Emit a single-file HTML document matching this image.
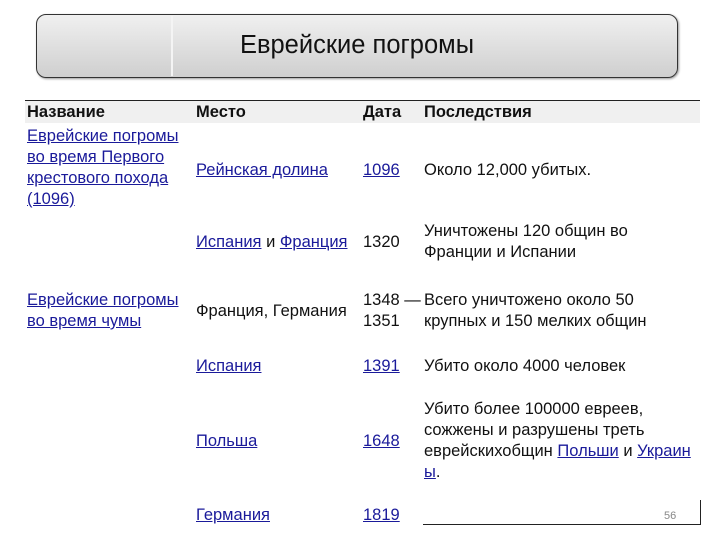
<!DOCTYPE html>
<html><head><meta charset="utf-8"><style>
body{margin:0;width:720px;height:540px;background:#fff;font-family:"Liberation Sans",sans-serif;font-size:16.5px;color:#111;position:relative;overflow:hidden}
.t{position:absolute;white-space:nowrap;line-height:21px;margin-top:1px}
a{color:#1a1a9a;text-decoration:underline}
.box{position:absolute;left:36px;top:14px;width:640px;height:62px;border:1px solid #333;border-radius:10px;background:linear-gradient(#f0f0f0,#cfcfcf);box-shadow:1px 1px 2px #999}
.div{position:absolute;left:134px;top:1px;width:2px;height:60px;background:#f4f4f4}
.hdr{position:absolute;left:25px;top:100px;width:675px;height:22px;background:#f0f0f0;border-top:1px solid #222}
</style></head><body>
<div class="box"><div class="div"></div><div style="position:absolute;left:0;right:0;top:16px;text-align:center;font-size:25.5px;color:#111">Еврейские погромы</div></div>
<div class="hdr"></div>
<div class="t" style="left:27px;top:101px;font-weight:bold">Название</div>
<div class="t" style="left:196px;top:101px;font-weight:bold">Место</div>
<div class="t" style="left:363px;top:101px;font-weight:bold">Дата</div>
<div class="t" style="left:424px;top:101px;font-weight:bold">Последствия</div>

<div class="t" style="left:27px;top:125px"><a>Еврейские погромы</a><br><a>во время Первого</a><br><a>крестового похода</a><br><a>(1096)</a></div>
<div class="t" style="left:196px;top:159px"><a>Рейнская долина</a></div>
<div class="t" style="left:363px;top:159px"><a>1096</a></div>
<div class="t" style="left:424px;top:159px">Около 12,000 убитых.</div>

<div class="t" style="left:196px;top:231px"><a>Испания</a> и <a>Франция</a></div>
<div class="t" style="left:363px;top:231px">1320</div>
<div class="t" style="left:424px;top:220px">Уничтожены 120 общин во<br>Франции и Испании</div>

<div class="t" style="left:27px;top:289px"><a>Еврейские погромы</a><br><a>во время чумы</a></div>
<div class="t" style="left:196px;top:300px">Франция, Германия</div>
<div class="t" style="left:363px;top:289px">1348 —<br>1351</div>
<div class="t" style="left:424px;top:289px">Всего уничтожено около 50<br>крупных и 150 мелких общин</div>

<div class="t" style="left:196px;top:355px"><a>Испания</a></div>
<div class="t" style="left:363px;top:355px"><a>1391</a></div>
<div class="t" style="left:424px;top:355px">Убито около 4000 человек</div>

<div class="t" style="left:196px;top:430px"><a>Польша</a></div>
<div class="t" style="left:363px;top:430px"><a>1648</a></div>
<div class="t" style="left:424px;top:398px">Убито более 100000 евреев,<br>сожжены и разрушены треть<br>еврейскихобщин <a>Польши</a> и <a>Украин</a><br><a>ы</a>.</div>

<div class="t" style="left:196px;top:504px"><a>Германия</a></div>
<div class="t" style="left:363px;top:504px"><a>1819</a></div>
<div style="position:absolute;left:423px;top:524px;width:277px;height:1px;background:#222"></div>
<div style="position:absolute;left:700px;top:500px;width:1px;height:25px;background:#222"></div>
<div class="t" style="left:664px;top:505px;font-size:11px;color:#888">56</div>
</body></html>
